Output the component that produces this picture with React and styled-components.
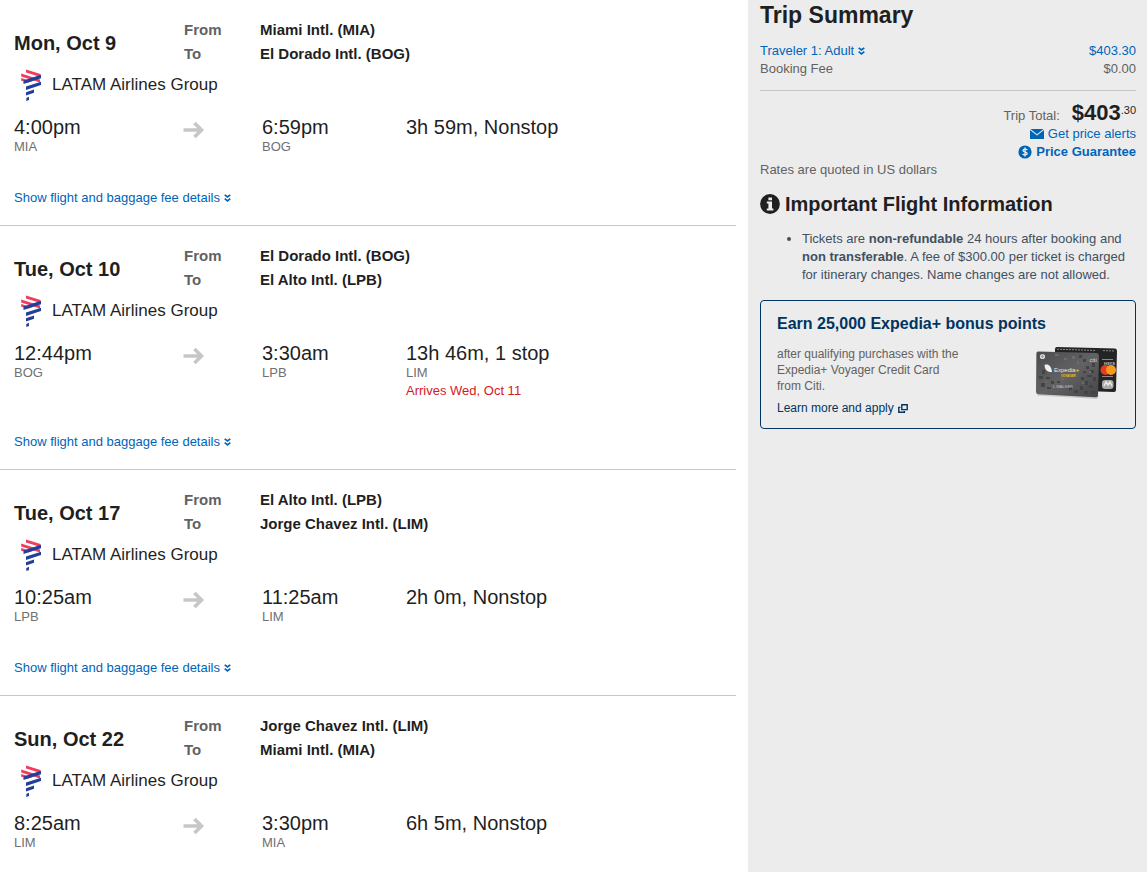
import styled, { createGlobalStyle } from "styled-components";

const flights = [
  {
    id: 1,
    date: "Mon, Oct 9",
    from: "Miami Intl. (MIA)",
    to: "El Dorado Intl. (BOG)",
    departTime: "4:00pm",
    departCode: "MIA",
    arriveTime: "6:59pm",
    arriveCode: "BOG",
    duration: "3h 59m, Nonstop",
    hasDetails: true,
  },
  {
    id: 2,
    date: "Tue, Oct 10",
    from: "El Dorado Intl. (BOG)",
    to: "El Alto Intl. (LPB)",
    departTime: "12:44pm",
    departCode: "BOG",
    arriveTime: "3:30am",
    arriveCode: "LPB",
    duration: "13h 46m, 1 stop",
    stop: "LIM",
    notice: "Arrives Wed, Oct 11",
    hasDetails: true,
  },
  {
    id: 3,
    date: "Tue, Oct 17",
    from: "El Alto Intl. (LPB)",
    to: "Jorge Chavez Intl. (LIM)",
    departTime: "10:25am",
    departCode: "LPB",
    arriveTime: "11:25am",
    arriveCode: "LIM",
    duration: "2h 0m, Nonstop",
    hasDetails: true,
  },
  {
    id: 4,
    date: "Sun, Oct 22",
    from: "Jorge Chavez Intl. (LIM)",
    to: "Miami Intl. (MIA)",
    departTime: "8:25am",
    departCode: "LIM",
    arriveTime: "3:30pm",
    arriveCode: "MIA",
    duration: "6h 5m, Nonstop",
    hasDetails: false,
  },
];

const ChevronsIcon = () => (
  <svg width="7" height="8" viewBox="0 0 7 8" fill="none" aria-hidden="true">
    <path
      d="M0.7 0.8 L3.5 3 L6.3 0.8 M0.7 4.6 L3.5 6.8 L6.3 4.6"
      stroke="currentColor"
      strokeWidth="1.7"
    />
  </svg>
);

const ArrowIcon = () => (
  <svg width="22" height="18" viewBox="0 0 22 18" fill="none" aria-hidden="true">
    <path d="M0.5 9 H18 M11.5 2 L18.5 9 L11.5 16" stroke="#c7c7c7" strokeWidth="3.6" />
  </svg>
);

const LatamLogo = () => (
  <svg width="22" height="32" viewBox="0 0 22 32" aria-hidden="true">
    <path d="M6 0.5 L20.5 5 V8 L6 3.5 Z" fill="#ef3e5b" />
    <path d="M1.2 4.5 L20 10.5 V13.5 L1.2 7.5 Z" fill="#ef3e5b" />
    <path d="M1.2 9 L12 12.2 L8 13.4 L1.2 11.8 Z" fill="#ef3e5b" />
    <path d="M3.5 11.5 L21 5.8 V9.3 L3.5 15 Z" fill="#233f9b" />
    <path d="M6 17.6 L21 12.8 V16 L6 20.9 Z" fill="#233f9b" />
    <path d="M6 23.2 L14 20.4 V23.8 L6 26.6 Z" fill="#233f9b" />
    <path d="M6.3 28.9 L9 27.8 V31 L6.3 32 Z" fill="#233f9b" />
  </svg>
);

const MailIcon = () => (
  <svg width="14" height="10" viewBox="0 0 14 10" aria-hidden="true">
    <path d="M0.5 0 H13.5 L7 5.2 Z M0 1 L7 6.6 L14 1 V10 H0 Z" fill="currentColor" />
  </svg>
);

const DollarIcon = () => (
  <svg width="14" height="14" viewBox="0 0 14 14" fill="none" aria-hidden="true">
    <circle cx="7" cy="7" r="6.6" fill="currentColor" />
    <path
      d="M9.2 5 C8.6 3.9 5 3.7 5 5.5 C5 7.3 9.2 6.5 9.2 8.5 C9.2 10.3 5.4 10.2 4.7 8.9 M7 2.6 V11.4"
      stroke="#ececec"
      strokeWidth="1.3"
    />
  </svg>
);

const InfoIcon = () => (
  <svg width="20" height="20" viewBox="0 0 20 20" aria-hidden="true">
    <circle cx="10" cy="10" r="9.9" fill="#1f1f1f" />
    <path d="M8.4 3.4 H12 V6.2 H8.4 Z M6.8 7.6 H12 V14.6 H13.4 V16.4 H6.8 V14.6 H8.4 V9.4 H6.8 Z" fill="#ececec" />
  </svg>
);

const PopupIcon = () => (
  <svg width="10" height="9" viewBox="0 0 10 9" fill="none" aria-hidden="true">
    <path d="M3.8 0.8 H9.2 V5.6 H3.8 Z M2.4 3.4 H0.8 V8.2 H6.4 V7" stroke="currentColor" strokeWidth="1.4" />
  </svg>
);

const CreditCards = () => (
  <svg width="84" height="54" viewBox="0 0 84 54" role="img" aria-label="Expedia+ Voyager credit cards">
    <defs>
      <linearGradient id="cardFace" x1="0" y1="0" x2="1" y2="1">
        <stop offset="0" stopColor="#4b4b4d" />
        <stop offset="0.5" stopColor="#626264" />
        <stop offset="1" stopColor="#454547" />
      </linearGradient>
    </defs>
    <path d="M22 1 L80 2.6 Q82 2.8 82 5 L81 44 Q81 46 79 46 L20 44 L20 3 Q20 1 22 1 Z" fill="#242425" />
    <path d="M22 3.2 L60 4.4 M68 4.6 L80 5" stroke="#8c8c8c" strokeWidth="1" strokeDasharray="2 1" />
    <path d="M67 13.5 H78 M67 30.5 H78" stroke="#8a8a8a" />
    <text x="69" y="19" fontSize="4" fontWeight="bold" fill="#c9c9c9">HSYS</text>
    <circle cx="70.5" cy="24" r="5" fill="#ea3b1f" />
    <circle cx="76" cy="24" r="5" fill="#f79a1c" />
    <rect x="67" y="34" width="11.5" height="9" rx="3" fill="#a9a9a9" />
    <path d="M69 40 L71 36 L73 39 L75 36 L77 40" stroke="#e9e9e9" fill="none" strokeWidth="1.5" />
    <path d="M2 49.5 L62 53 L64 50 L3 46 Z" fill="#c9c9c9" />
    <path d="M3 5.5 L61.5 7 Q64 7.2 64 9.4 L63 49.5 Q63 51.5 60.5 51.3 L3 48.2 Q1 48 1 46 L1.4 7.4 Q1.4 5.5 3 5.5 Z" fill="url(#cardFace)" />
    <path
      d="M51 20h3v3h-3z M55 24h4v3h-4z M48 25h3v2h-3z M57 17h3v4h-3z M52 29h5v2h-5z M46 31h3v3h-3z M58 31h3v4h-3z M50 35h3v4h-3z M54 39h4v3h-4z M45 40h3v4h-3z M39 44h4v3h-4z M49 45h4v3h-4z M56 45h5v3h-5z M34 41h3v3h-3z M7 24h3v4h-3z M4 30h4v3h-4z M11 31h4v2h-4z M16 35h3v3h-3z M6 37h4v4h-4z M12 41h4v2h-4z M22 35h3v2h-3z M44 9h3v3h-3z M48 13h3v3h-3z"
      fill="#434345"
    />
    <path
      d="M20 8h4v2h-4z M29 12h3v2h-3z M37 10h3v3h-3z M42 15h2v3h-2z M54 25h2v2h-2z M47 36h2v2h-2z M10 35h2v2h-2z M26 32h3v2h-3z"
      fill="#6c6c6e"
    />
    <circle cx="7.5" cy="10.5" r="2.6" fill="#d8d8d8" />
    <path d="M7.5 8.5 V12 M6 10.5 H9" stroke="#999" strokeWidth="0.8" />
    <text x="54.5" y="15.5" fontSize="6" fill="#d8d8d8">citi</text>
    <path d="M9.5 19 C13 17.5 16.5 20 17 26 C12.5 26.5 9.8 24 9.5 19 Z" fill="#efefef" />
    <text x="19" y="26.2" fontSize="6" fill="#e4e4e4">
      Expedia<tspan fill="#f4cf1c" fontWeight="bold">+</tspan>
    </text>
    <text x="26" y="31" fontSize="3" fontWeight="bold" fill="#e8c51c">VOYAGER</text>
    <text x="18" y="42" fontSize="4" fill="#c4c4c4">L WALKER</text>
  </svg>
);

const Flight = ({ flight }) => {
  return (
    <FlightCard>
      <RouteGrid>
        <FlightDate>{flight.date}</FlightDate>
        <RouteLines $muted>
          <span>From</span>
          <span>To</span>
        </RouteLines>
        <RouteLines>
          <span>{flight.from}</span>
          <span>{flight.to}</span>
        </RouteLines>
      </RouteGrid>
      <Airline>
        <LatamLogo />
        <span>LATAM Airlines Group</span>
      </Airline>
      <TimesGrid>
        <div>
          <Time>{flight.departTime}</Time>
          <Code>{flight.departCode}</Code>
        </div>
        <ArrowHolder>
          <ArrowIcon />
        </ArrowHolder>
        <div>
          <Time>{flight.arriveTime}</Time>
          <Code>{flight.arriveCode}</Code>
        </div>
        <div>
          <Time>{flight.duration}</Time>
          {flight.stop && <Code>{flight.stop}</Code>}
          {flight.notice && <Notice>{flight.notice}</Notice>}
        </div>
      </TimesGrid>
      {flight.hasDetails && (
        <DetailsLink href="#details">
          Show flight and baggage fee details
          <ChevronsIcon />
        </DetailsLink>
      )}
    </FlightCard>
  );
};

const TripSummary = () => {
  return (
    <Sidebar>
      <SummaryTitle>Trip Summary</SummaryTitle>
      <PriceRow>
        <Link href="#traveler">
          Traveler 1: Adult
          <ChevronsIcon />
        </Link>
        <Link href="#traveler">$403.30</Link>
      </PriceRow>
      <PriceRow>
        <span>Booking Fee</span>
        <span>$0.00</span>
      </PriceRow>
      <TotalBlock>
        <TotalRow>
          <span>Trip Total:</span>
          <Total>
            $403<Cents>.30</Cents>
          </Total>
        </TotalRow>
        <Link href="#alerts">
          <MailIcon />
          Get price alerts
        </Link>
        <Link href="#guarantee" $bold>
          <DollarIcon />
          Price Guarantee
        </Link>
      </TotalBlock>
      <Rates>Rates are quoted in US dollars</Rates>
      <InfoTitle>
        <InfoIcon />
        Important Flight Information
      </InfoTitle>
      <InfoList>
        <li>
          Tickets are <b>non-refundable</b> 24 hours after booking and{" "}
          <b>non transferable</b>. A fee of $300.00 per ticket is charged for
          itinerary changes. Name changes are not allowed.
        </li>
      </InfoList>
      <Offer>
        <OfferTitle>Earn 25,000 Expedia+ bonus points</OfferTitle>
        <OfferBody>
          <div>
            <OfferText>
              after qualifying purchases with the Expedia+ Voyager Credit Card
              from Citi.
            </OfferText>
            <OfferLink href="#apply">
              Learn more and apply
              <PopupIcon />
            </OfferLink>
          </div>
          <CreditCards />
        </OfferBody>
      </Offer>
    </Sidebar>
  );
};

const App = () => {
  return (
    <>
      <GlobalStyle />
      <Root>
        <Flights>
          {flights.map((flight) => (
            <Flight key={flight.id} flight={flight} />
          ))}
        </Flights>
        <TripSummary />
      </Root>
    </>
  );
};

export default App;

const GlobalStyle = createGlobalStyle`
  * {
    box-sizing: border-box;
  }

  body {
    margin: 0;
    background-color: #fff;
    color: #1f1f1f;
    font-family: "Liberation Sans", Arial, sans-serif;
    font-size: 13px;
    line-height: 18px;
  }

  svg {
    flex-shrink: 0;
  }
`;

const Root = styled.div`
  display: flex;
  gap: 12px;
  min-height: 100vh;
`;

const Flights = styled.main`
  flex: 1;
  min-width: 0;
`;

const FlightCard = styled.section`
  padding: 18px 14px;
  border-bottom: 1px solid #c7c7c7;

  &:last-child {
    border-bottom: none;
  }
`;

const RouteGrid = styled.div`
  display: grid;
  grid-template-columns: 170px 76px 1fr;
  align-items: center;
`;

const FlightDate = styled.h2`
  margin: 2px 0 0;
  font-size: 20px;
  line-height: 24px;
`;

const RouteLines = styled.div`
  display: flex;
  flex-direction: column;
  color: ${({ $muted }) => ($muted ? "#626262" : "#1f1f1f")};
  font-size: 15px;
  font-weight: bold;
  line-height: 24px;
`;

const Airline = styled.div`
  display: flex;
  align-items: center;
  gap: 10px;
  height: 38px;
  padding-left: 6px;
  font-size: 17px;
`;

const TimesGrid = styled.div`
  display: grid;
  grid-template-columns: 169px 79px 144px 1fr;
  margin-top: 12px;
`;

const Time = styled.div`
  font-size: 20px;
  line-height: 22px;
`;

const Code = styled.div`
  color: #707070;
`;

const Notice = styled.div`
  color: #d5191f;
`;

const ArrowHolder = styled.div`
  padding-top: 5px;

  svg {
    display: block;
  }
`;

const Link = styled.a`
  display: inline-flex;
  align-items: center;
  gap: 4px;
  color: #0064b9;
  font-weight: ${({ $bold }) => ($bold ? "bold" : "normal")};
  text-decoration: none;
`;

const DetailsLink = styled(Link)`
  display: flex;
  margin-top: 33px;
`;

const Sidebar = styled.aside`
  flex: 0 0 399px;
  padding: 3px 11px 0 12px;
  background-color: #ececec;
  color: #626262;
`;

const SummaryTitle = styled.h2`
  margin: 0 0 15px;
  color: #1f1f1f;
  font-size: 23px;
  line-height: 24px;
`;

const PriceRow = styled.div`
  display: flex;
  justify-content: space-between;
`;

const TotalBlock = styled.div`
  display: flex;
  flex-direction: column;
  align-items: flex-end;
  margin-top: 12px;
  padding-top: 10px;
  border-top: 1px solid #c7c7c7;
`;

const TotalRow = styled.div`
  display: flex;
  align-items: baseline;
  gap: 12px;
`;

const Total = styled.strong`
  display: flex;
  color: #1f1f1f;
  font-size: 22px;
  line-height: 24px;
`;

const Cents = styled.span`
  font-size: 11px;
  font-weight: normal;
  line-height: 18px;
`;

const Rates = styled.p`
  margin: 0;
`;

const InfoTitle = styled.h3`
  display: flex;
  align-items: center;
  gap: 5px;
  margin: 13px 0 14px;
  color: #1f1f1f;
  font-size: 20px;
  line-height: 24px;
`;

const InfoList = styled.ul`
  margin: 0 0 16px;
  padding-left: 42px;
  color: #41505f;
`;

const Offer = styled.section`
  padding: 13px 16px 12px;
  border: 1px solid #003461;
  border-radius: 4px;
`;

const OfferTitle = styled.h3`
  margin: 0 0 12px;
  color: #003461;
  font-size: 16px;
  line-height: 20px;
`;

const OfferBody = styled.div`
  display: flex;
  justify-content: space-between;
  font-size: 12px;
  line-height: 16px;
`;

const OfferText = styled.p`
  max-width: 188px;
  margin: 0 0 6px;
`;

const OfferLink = styled(Link)`
  color: #003461;
`;
